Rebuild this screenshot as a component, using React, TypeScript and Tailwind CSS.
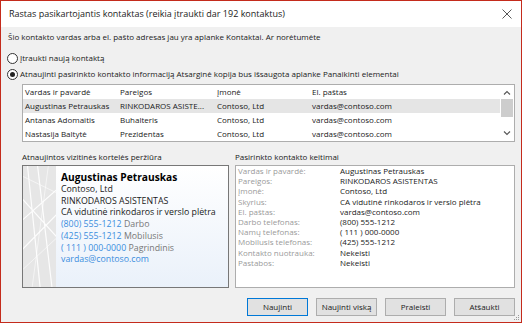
import React from "react";

const rows = [
  { name: "Augustinas Petrauskas", title: "RINKODAROS ASISTE...", company: "Contoso, Ltd", email: "vardas@contoso.com", selected: true },
  { name: "Antanas Adomaitis", title: "Buhalteris", company: "Contoso, Ltd", email: "vardas@contoso.com", selected: false },
  { name: "Nastasija Baltytė", title: "Prezidentas", company: "Contoso, Ltd", email: "vardas@contoso.com", selected: false },
];

const changes = [
  ["Vardas ir pavardė:", "Augustinas Petrauskas"],
  ["Pareigos:", "RINKODAROS ASISTENTAS"],
  ["Įmonė:", "Contoso, Ltd"],
  ["Skyrius:", "CA vidutinė rinkodaros ir verslo plėtra"],
  ["El. paštas:", "vardas@contoso.com"],
  ["Darbo telefonas:", "(800) 555-1212"],
  ["Namų telefonas:", "( 111 ) 000-0000"],
  ["Mobilusis telefonas:", "(425) 555-1212"],
  ["Kontakto nuotrauka:", "Nekeisti"],
  ["Pastabos:", "Nekeisti"],
];

function Radio({ checked, label }: { checked?: boolean; label: string }) {
  return (
    <div className="flex items-center h-[16px]">
      <span className="w-[11px] h-[11px] rounded-full border border-[#333] bg-white flex items-center justify-center shrink-0">
        {checked && <span className="w-[5px] h-[5px] rounded-full bg-[#222]" />}
      </span>
      <span className="ml-[2px] whitespace-nowrap">{label}</span>
    </div>
  );
}

function Button({ label, primary }: { label: string; primary?: boolean }) {
  return (
    <div
      className={
        "w-[61px] h-[18px] flex items-center justify-center bg-[#e1e1e1] border " +
        (primary ? "border-[#0078d7]" : "border-[#adadad]")
      }
    >
      {label}
    </div>
  );
}

export default function App() {
  return (
    <div className="w-[522px] h-[323px] border border-[#c42b1c] flex flex-col font-['Open_Sans',sans-serif] text-[#1a1a1a] overflow-hidden relative">
      {/* title bar */}
      <div className="h-[26px] shrink-0 bg-white flex items-center justify-between pl-[8px] pr-[9px]">
        <span className="text-[9px]">Rastas pasikartojantis kontaktas (reikia įtraukti dar 192 kontaktus)</span>
        <svg width="10" height="10" viewBox="0 0 10 10">
          <path d="M0.5 0.5 L9.5 9.5 M9.5 0.5 L0.5 9.5" stroke="#444" strokeWidth="0.9" />
        </svg>
      </div>

      <div className="flex-1 bg-[#f0f0f0] flex flex-col text-[8px] px-[6px]">
        <div className="mt-[3px] h-[14px] flex items-center pl-[1px] whitespace-nowrap">
          Šio kontakto vardas arba el. pašto adresas jau yra aplanke Kontaktai. Ar norėtumėte
        </div>
        <div className="mt-[6px]">
          <Radio label="Įtraukti naują kontaktą" />
          <Radio checked label="Atnaujinti pasirinkto kontakto informaciją Atsarginė kopija bus išsaugota aplanke Panaikinti elementai" />
        </div>

        {/* table */}
        <div className="ml-[15px] mt-[2px] h-[58px] border border-[#adadad] bg-white flex">
          <div className="flex-1 flex flex-col">
            <div className="h-[14px] flex items-center pl-[2px]">
              <span className="w-[95px]">Vardas ir pavardė</span>
              <span className="w-[97px]">Pareigos</span>
              <span className="w-[95px]">Įmonė</span>
              <span>El. paštas</span>
            </div>
            {rows.map((r) => (
              <div key={r.name} className={"h-[14px] flex items-center pl-[2px] " + (r.selected ? "bg-[#e5e5e5]" : "")}>
                <span className="w-[95px] whitespace-nowrap">{r.name}</span>
                <span className="w-[97px] whitespace-nowrap">{r.title}</span>
                <span className="w-[95px]">{r.company}</span>
                <span>{r.email}</span>
              </div>
            ))}
          </div>
          <div className="w-[14px] flex flex-col items-center">
            <svg width="8" height="8" viewBox="0 0 8 8" className="mt-[4px]">
              <path d="M1 5.5 L4 2.5 L7 5.5" stroke="#555" strokeWidth="1.1" fill="none" />
            </svg>
            <div className="mt-[2px] w-[12px] h-[18px] bg-[#cdcdcd]" />
            <div className="flex-1" />
            <svg width="8" height="8" viewBox="0 0 8 8" className="mb-[4px]">
              <path d="M1 2.5 L4 5.5 L7 2.5" stroke="#555" strokeWidth="1.1" fill="none" />
            </svg>
          </div>
        </div>

        {/* lower panels */}
        <div className="ml-[15px] mt-[8px] flex gap-[6px]">
          <div className="w-[207px] flex flex-col">
            <div className="h-[13px] flex items-center whitespace-nowrap">Atnaujintos vizitinės kortelės peržiūra</div>
            <div className="mt-[2px] h-[123px] border border-[#777] flex">
              <div className="w-[33px] bg-[#e6e6e6] overflow-hidden">
                <svg width="33" height="121" viewBox="0 0 33 121">
                  <path d="M-5 58 L40 18 M-5 88 L40 42 M4 -5 L18 130 M-5 28 L40 78 M14 -5 L30 130" stroke="#ffffff" strokeWidth="1.2" opacity="0.9" fill="none" />
                  <path d="M-5 108 L40 66 M26 -5 L8 130 M-5 8 L40 30" stroke="#ffffff" strokeWidth="0.8" opacity="0.7" fill="none" />
                </svg>
              </div>
              <div className="flex-1 bg-gradient-to-b from-white to-[#eaf1fa] pl-[5px] pt-[4px] flex flex-col text-[8.8px] leading-[11.7px] whitespace-nowrap">
                <div className="text-[10.2px] font-bold leading-[14px] text-black">Augustinas Petrauskas</div>
                <div>Contoso, Ltd</div>
                <div>RINKODAROS ASISTENTAS</div>
                <div>CA vidutinė rinkodaros ir verslo plėtra</div>
                <div><span className="text-[#3b8ede]">(800) 555-1212</span> <span className="text-[#777]">Darbo</span></div>
                <div><span className="text-[#3b8ede]">(425) 555-1212</span> <span className="text-[#777]">Mobilusis</span></div>
                <div><span className="text-[#3b8ede]">( 111 ) 000-0000</span> <span className="text-[#777]">Pagrindinis</span></div>
                <div className="text-[#3b8ede]">vardas@contoso.com</div>
              </div>
            </div>
          </div>
          <div className="flex-1 flex flex-col">
            <div className="h-[13px] flex items-center">Pasirinkto kontakto keitimai</div>
            <div className="mt-[2px] h-[123px] border border-[#adadad] bg-white pl-[2px]">
              {changes.map(([k, v]) => (
                <div key={k} className="flex h-[10.2px] items-center leading-[10.2px]">
                  <span className="w-[102px] text-[#9a9a9a] whitespace-nowrap">{k}</span>
                  <span className="whitespace-nowrap">{v}</span>
                </div>
              ))}
            </div>
          </div>
        </div>

        {/* buttons */}
        <div className="mt-[10px] flex justify-end gap-[8px]">
          <Button primary label="Naujinti" />
          <Button label="Naujinti viską" />
          <Button label="Praleisti" />
          <Button label="Atšaukti" />
        </div>
      </div>

      <svg width="6" height="6" viewBox="0 0 6 6" className="absolute right-[1px] bottom-[1px]">
        <rect x="4" y="0" width="1" height="1" fill="#999" />
        <rect x="2" y="2" width="1" height="1" fill="#999" />
        <rect x="4" y="2" width="1" height="1" fill="#999" />
        <rect x="0" y="4" width="1" height="1" fill="#999" />
        <rect x="2" y="4" width="1" height="1" fill="#999" />
        <rect x="4" y="4" width="1" height="1" fill="#999" />
      </svg>
    </div>
  );
}
